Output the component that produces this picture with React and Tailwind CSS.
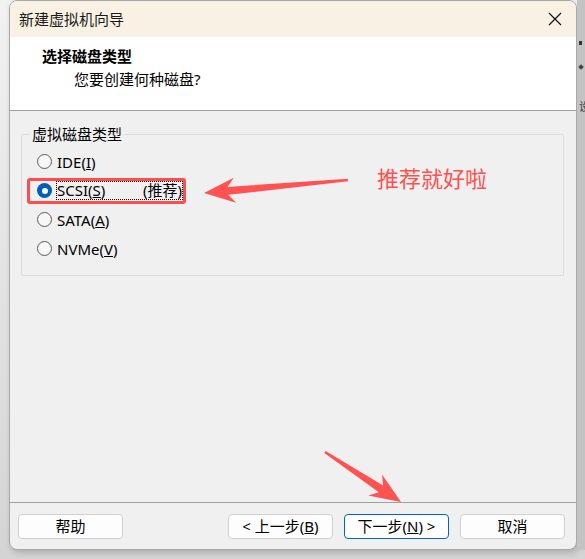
import React from "react";

function arrowPoints(tx, ty, px, py, L = 31, hw = 12.5, nw = 4, tw = 1.2, notch = 7) {
  const dx = px - tx, dy = py - ty;
  const len = Math.hypot(dx, dy);
  const ux = dx / len, uy = dy / len;
  const nx = -uy, ny = ux;
  const bx = px - ux * L, by = py - uy * L;
  const kx = px - ux * (L - notch), ky = py - uy * (L - notch);
  const pts = [
    [tx + nx * tw, ty + ny * tw],
    [kx + nx * nw, ky + ny * nw],
    [bx + nx * hw, by + ny * hw],
    [px, py],
    [bx - nx * hw, by - ny * hw],
    [kx - nx * nw, ky - ny * nw],
    [tx - nx * tw, ty - ny * tw],
  ];
  return pts.map((p) => p[0].toFixed(1) + "," + p[1].toFixed(1)).join(" ");
}

function Radio({ checked }) {
  return checked ? (
    <span className="w-[15px] h-[15px] rounded-full bg-[#005fb8] flex items-center justify-center shrink-0">
      <span className="w-[6px] h-[6px] rounded-full bg-white" />
    </span>
  ) : (
    <span className="w-[15px] h-[15px] rounded-full border border-[#5a5a5a] bg-[#f7f7f7] shrink-0" />
  );
}

function Btn({ children, primary }) {
  return (
    <div
      className={
        "w-[105px] h-[25px] rounded-[4px] bg-[#fdfdfd] flex items-center justify-center text-[15px] leading-none " +
        (primary ? "border border-[#0067c0]" : "border border-[#d0d0d0]")
      }
    >
      {children}
    </div>
  );
}

export default function App() {
  return (
    <div className="relative w-[585px] h-[559px] overflow-hidden bg-gradient-to-b from-[#f2f2f2] to-[#d4d4d4] flex font-['Noto_Sans','Noto_Sans_CJK_SC',sans-serif] text-black">
      <div className="ml-[9px] w-[568px] h-[550px] rounded-[8px] border border-[#a8a8a8] overflow-hidden flex flex-col bg-[#f0f0f0] shadow-[2px_3px_6px_rgba(0,0,0,0.18)] shrink-0">
        {/* title bar */}
        <div className="h-[36px] bg-[#f8f1e4] flex items-center justify-between pl-[9px] pr-[14px] shrink-0">
          <span className="text-[15px] leading-[20px] text-[#1a1a1a]">新建虚拟机向导</span>
          <svg width="14" height="14" viewBox="0 0 14 14">
            <path d="M1 1 L13 13 M13 1 L1 13" stroke="#111" strokeWidth="1.2" fill="none" />
          </svg>
        </div>
        {/* header */}
        <div className="h-[74px] bg-white border-b border-[#a0a0a0] pt-[9px] shrink-0">
          <div className="pl-[32px] text-[15px] leading-[20px] font-bold">选择磁盘类型</div>
          <div className="pl-[64px] mt-[3px] text-[15px] leading-[20px]">您要创建何种磁盘?</div>
        </div>
        {/* body */}
        <div className="flex-1 flex flex-col">
          <div className="relative mt-[23px] ml-[11px] w-[543px] h-[142px] border border-[#dcdcdc] rounded-[2px]">
            <span className="absolute top-[-11px] left-[8px] px-[2px] bg-[#f0f0f0] text-[15px] leading-[20px]">虚拟磁盘类型</span>
            <div className="pt-[12px] pl-[15px] flex flex-col">
              <div className="h-[29px] flex items-center gap-[5px]">
                <Radio />
                <span className="text-[15px] leading-[20px]">IDE(<span className="underline">I</span>)</span>
              </div>
              <div className="h-[29px] flex items-center gap-[4px]">
                <Radio checked />
                <span className="text-[15px] leading-[17px] border border-dotted border-black flex">
                  <span className="w-[86px]">SCSI(<span className="underline">S</span>)</span>
                  <span>(推荐)</span>
                </span>
              </div>
              <div className="h-[29px] flex items-center gap-[5px]">
                <Radio />
                <span className="text-[15px] leading-[20px]">SATA(<span className="underline">A</span>)</span>
              </div>
              <div className="h-[29px] flex items-center gap-[5px]">
                <Radio />
                <span className="text-[15px] leading-[20px]">NVMe(<span className="underline">V</span>)</span>
              </div>
            </div>
            <div className="absolute left-[5px] top-[43px] w-[159px] h-[26px] border-[3px] border-[#ff4d4d] rounded-[3px]" />
          </div>
        </div>
        {/* footer */}
        <div className="h-[47px] border-t border-[#a0a0a0] flex items-start pt-[11px] pl-[8px] pr-[11px] justify-between shrink-0">
          <Btn>帮助</Btn>
          <div className="flex gap-[11px]">
            <Btn>&lt; 上一步(<span className="underline">B</span>)</Btn>
            <Btn primary>下一步(<span className="underline">N</span>) &gt;</Btn>
            <Btn>取消</Btn>
          </div>
        </div>
      </div>
      {/* desktop strip on the right */}
      <div className="flex-1 h-[550px] bg-[#c3c3c3] flex flex-col items-start pl-[2px] pt-[41px]">
        <span className="w-[3px] h-[4px] bg-[#333]" />
        <span className="mt-[20px] w-[4px] h-[4px] bg-[#444] rotate-45" />
        <span className="mt-[32px] text-[11px] leading-none text-[#333]">设</span>
      </div>

      {/* annotations */}
      <span className="absolute left-[377px] top-[164px] text-[22px] leading-[26px] text-[#ff4f4f] font-['Noto_Sans_CJK_SC',sans-serif]">推荐就好啦</span>
      <svg className="absolute inset-0 pointer-events-none" width="585" height="559">
        <polygon points={arrowPoints(348, 180, 204, 193)} fill="#ff5252" />
        <polygon points={arrowPoints(325, 452, 401, 502)} fill="#ff5252" />
      </svg>
    </div>
  );
}
